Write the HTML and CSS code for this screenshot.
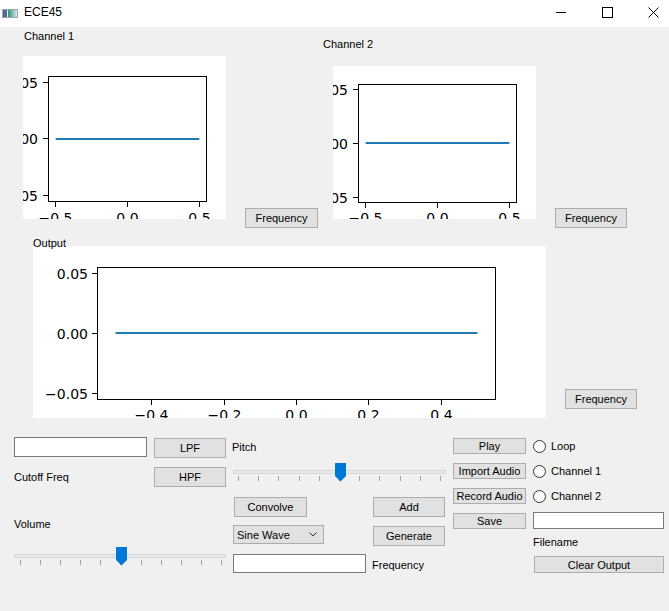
FILE: index.html
```html
<!DOCTYPE html>
<html>
<head>
<meta charset="utf-8">
<title>ECE45</title>
<link rel="stylesheet" href="styles.css">
</head>
<body>
<div class="titlebar">
  <svg class="app-icon" width="16" height="12" viewBox="0 0 16 12">
    <defs>
      <linearGradient id="ig" x1="0" x2="1" y1="0" y2="0">
        <stop offset="0" stop-color="#2f8f6f"/>
        <stop offset="1" stop-color="#d8ecf2"/>
      </linearGradient>
    </defs>
    <rect x="0.5" y="3.5" width="15" height="8" fill="#e8eef2" stroke="#9aa6b0"/>
    <rect x="1" y="4" width="4" height="7" fill="#4f6c8c"/>
    <rect x="6" y="4" width="9" height="7" fill="url(#ig)"/>
  </svg>
  <span class="title">ECE45</span>
  <div class="winctl">
    <div class="wbtn"><svg width="11" height="11" viewBox="0 0 11 11"><path d="M0 5.5H10" stroke="#000" stroke-width="1"/></svg></div>
    <div class="wbtn"><svg width="11" height="11" viewBox="0 0 11 11"><rect x="0.5" y="0.5" width="10" height="10" fill="none" stroke="#000"/></svg></div>
    <div class="wbtn close"><svg width="11" height="11" viewBox="0 0 11 11"><path d="M0.5 0.5L10.5 10.5M10.5 0.5L0.5 10.5" stroke="#000" stroke-width="1"/></svg></div>
  </div>
</div>

<div class="top-row">
  <div class="ch ch1">
    <div class="lbl">Channel 1</div>
    <div class="canvas c1">
      <svg width="203" height="163" viewBox="0 0 203 163" class="plot">
        <g stroke="#000" stroke-width="1" fill="none">
          <rect x="25.5" y="20.5" width="158" height="125"/>
          <path d="M20 26.5H25M20 82.5H25M20 139.5H25M32.5 146V151M104.5 146V151M176.5 146V151"/>
        </g>
        <path d="M32.7 83H176.3" stroke="#1f77b4" stroke-width="2"/>
        <g class="tl" text-anchor="end">
          <text x="15" y="31.5">0.05</text>
          <text x="15" y="87.5">0.00</text>
          <text x="15" y="144.5">−0.05</text>
        </g>
        <g class="tl" text-anchor="middle">
          <text x="32.5" y="167">−0.5</text>
          <text x="104.5" y="167">0.0</text>
          <text x="176.5" y="167">0.5</text>
        </g>
      </svg>
    </div>
  </div>
  <button class="btn freq f1">Frequency</button>
  <div class="ch ch2">
    <div class="lbl">Channel 2</div>
    <div class="canvas c2">
      <svg width="203" height="153" viewBox="0 0 203 153" class="plot">
        <g stroke="#000" stroke-width="1" fill="none">
          <rect x="25.5" y="18.5" width="158" height="118"/>
          <path d="M20 23.5H25M20 77.5H25M20 131.5H25M32.5 137V142M104.5 137V142M176.5 137V142"/>
        </g>
        <path d="M32.7 77H176.3" stroke="#1f77b4" stroke-width="2"/>
        <g class="tl" text-anchor="end">
          <text x="15" y="28.5">0.05</text>
          <text x="15" y="82.5">0.00</text>
          <text x="15" y="136.5">−0.05</text>
        </g>
        <g class="tl" text-anchor="middle">
          <text x="32.5" y="157">−0.5</text>
          <text x="104.5" y="157">0.0</text>
          <text x="176.5" y="157">0.5</text>
        </g>
      </svg>
    </div>
  </div>
  <button class="btn freq f2">Frequency</button>
</div>

<div class="out-row">
  <div class="out">
    <div class="lbl out-lbl">Output</div>
    <div class="canvas c3">
      <svg width="513" height="172" viewBox="0 0 513 172" class="plot">
        <g stroke="#000" stroke-width="1" fill="none">
          <rect x="64.5" y="21.5" width="398" height="132"/>
          <path d="M59 27.5H64M59 87.5H64M59 147.5H64M118.5 154V159M191.5 154V159M263.5 154V159M335.5 154V159M408.5 154V159"/>
        </g>
        <path d="M82.6 87H444.4" stroke="#1f77b4" stroke-width="2"/>
        <g class="tl" text-anchor="end">
          <text x="55" y="32.5">0.05</text>
          <text x="55" y="92.5">0.00</text>
          <text x="55" y="152.5">−0.05</text>
        </g>
        <g class="tl" text-anchor="middle">
          <text x="118.5" y="174">−0.4</text>
          <text x="191.5" y="174">−0.2</text>
          <text x="263.5" y="174">0.0</text>
          <text x="335.5" y="174">0.2</text>
          <text x="408.5" y="174">0.4</text>
        </g>
      </svg>
    </div>
  </div>
  <button class="btn freq f3">Frequency</button>
</div>

<div class="controls">
  <div class="col col-a">
    <div class="row r-lpf">
      <input class="field cutoff" type="text">
      <button class="btn filt lpf">LPF</button>
    </div>
    <div class="row r-hpf">
      <span class="grow">Cutoff Freq</span>
      <button class="btn filt">HPF</button>
    </div>
    <div class="lbl vol-lbl">Volume</div>
    <div class="slider vol">
      <div class="groove"></div>
      <svg class="handle" width="11" height="19" viewBox="0 0 11 19"><path d="M0 0H11V13L5.5 18.5L0 13Z" fill="#0078d7"/></svg>
      <div class="ticks"><i></i><i></i><i></i><i></i><i></i><i></i><i></i><i></i><i></i><i></i><i></i></div>
    </div>
  </div>

  <div class="col col-b">
    <div class="lbl pitch-lbl">Pitch</div>
    <div class="slider pitch">
      <div class="groove"></div>
      <svg class="handle" width="11" height="19" viewBox="0 0 11 19"><path d="M0 0H11V13L5.5 18.5L0 13Z" fill="#0078d7"/></svg>
      <div class="ticks"><i></i><i></i><i></i><i></i><i></i><i></i><i></i><i></i><i></i><i></i><i></i></div>
    </div>
    <div class="row r-conv">
      <button class="btn mid conv">Convolve</button>
      <button class="btn mid">Add</button>
    </div>
    <div class="row r-gen">
      <div class="combo"><span>Sine Wave</span><svg width="8" height="5" viewBox="0 0 8 5"><path d="M0.5 0.5L4 4L7.5 0.5" fill="none" stroke="#333" stroke-width="1"/></svg></div>
      <button class="btn mid gen">Generate</button>
    </div>
    <div class="row r-freq">
      <input class="field freqin" type="text">
      <span class="freq-lbl">Frequency</span>
    </div>
  </div>

  <div class="col col-c">
    <div class="row r-c first">
      <button class="btn small">Play</button>
      <span class="radio"></span><span class="rlbl">Loop</span>
    </div>
    <div class="row r-c">
      <button class="btn small">Import Audio</button>
      <span class="radio"></span><span class="rlbl">Channel 1</span>
    </div>
    <div class="row r-c">
      <button class="btn small">Record Audio</button>
      <span class="radio"></span><span class="rlbl">Channel 2</span>
    </div>
    <div class="row r-c">
      <button class="btn small">Save</button>
      <input class="field fname" type="text">
    </div>
    <div class="lbl fname-lbl">Filename</div>
    <button class="btn clear">Clear Output</button>
  </div>
</div>
</body>
</html>
```

FILE: styles.css
```css
html, body {
  margin: 0;
  padding: 0;
  overflow: hidden;
}
body {
  width: 669px;
  height: 611px;
  background: #f0f0f0;
  font-family: "Liberation Sans", Arial, sans-serif;
  font-size: 11px;
  color: #000;
}

/* title bar */
.titlebar {
  box-sizing: border-box;
  height: 27px;
  padding-bottom: 3px;
  background: #fff;
  display: flex;
  align-items: center;
}
.app-icon {
  margin-left: 2px;
  display: block;
}
.title {
  margin-left: 6px;
  font-size: 12px;
}
.winctl {
  margin-left: auto;
  display: flex;
  height: 24px;
}
.wbtn {
  width: 46px;
  height: 24px;
  display: flex;
  align-items: center;
  justify-content: center;
}
.wbtn svg { display: block; }
.wbtn.close {
  box-sizing: border-box;
  width: 39px;
  justify-content: flex-start;
  padding-left: 18px;
}

/* generic */
.lbl {
  line-height: 13px;
  height: 13px;
  white-space: nowrap;
}
.btn {
  box-sizing: border-box;
  margin: 0;
  padding: 0;
  background: #e1e1e1;
  border: 1px solid #adadad;
  border-radius: 0;
  font-family: inherit;
  font-size: 11px;
  color: #000;
  display: flex;
  align-items: center;
  justify-content: center;
  white-space: nowrap;
}
.field {
  box-sizing: border-box;
  margin: 0;
  padding: 0;
  background: #fff;
  border: 1px solid #7a7a7a;
  border-radius: 0;
  outline: none;
}
.canvas {
  background: #fff;
  overflow: hidden;
}
.plot {
  display: block;
}
.tl text {
  font-family: "DejaVu Sans", sans-serif;
  font-size: 14px;
  fill: #000;
}
.row {
  display: flex;
  align-items: flex-start;
}

/* top row */
.top-row {
  display: flex;
  align-items: flex-start;
}
.ch1 {
  margin-left: 23px;
  margin-top: 3px;
}
.ch1 .lbl { padding-left: 1px; }
.c1 {
  margin-top: 13px;
  width: 203px;
  height: 163px;
}
.freq {
  width: 73px;
  height: 20px;
}
.f1 {
  margin-left: 19px;
  margin-top: 181px;
}
.ch2 {
  margin-left: 5px;
  margin-top: 11px;
}
.c2 {
  margin-top: 15px;
  margin-left: 10px;
  width: 203px;
  height: 153px;
}
.f2 {
  margin-left: 19px;
  margin-top: 181px;
  width: 72px;
}

/* output row */
.out-row {
  display: flex;
  align-items: flex-start;
  margin-top: 9px;
}
.out {
  margin-left: 33px;
}
.out-lbl {
  position: relative;
  z-index: 1;
  margin-bottom: -4px;
}
.c3 {
  width: 513px;
  height: 172px;
}
.f3 {
  margin-left: 19px;
  margin-top: 152px;
  width: 72px;
}

/* controls */
.controls {
  display: flex;
  align-items: flex-start;
  margin-top: 19px;
}
.col-a {
  margin-left: 14px;
  width: 212px;
}
.cutoff {
  width: 133px;
  height: 20px;
}
.filt {
  width: 72px;
  height: 20px;
}
.lpf {
  margin-left: 7px;
  margin-top: 1px;
}
.r-hpf {
  margin-top: 9px;
  align-items: center;
}
.grow { flex: 1; }
.vol-lbl { margin-top: 31px; }

.slider {
  position: relative;
  height: 26px;
}
.groove {
  box-sizing: border-box;
  position: relative;
  top: 7px;
  height: 4px;
  background: #e7eaea;
  border: 1px solid #d6d6d6;
}
.handle {
  position: absolute;
  top: 0;
  left: 102px;
  display: block;
}
.ticks {
  box-sizing: border-box;
  display: flex;
  justify-content: space-between;
  margin-top: 9px;
  height: 5px;
}
.ticks i {
  display: block;
  width: 1px;
  height: 5px;
  background: #a0a0a0;
}
.vol {
  margin-top: 16px;
  width: 212px;
}
.vol .ticks {
  padding: 0 4px 0 6px;
}

.col-b {
  margin-left: 6px;
  width: 214px;
}
.pitch-lbl { margin-top: 4px; }
.pitch {
  margin-top: 9px;
  margin-left: 1px;
  width: 213px;
}
.pitch .ticks {
  padding: 0 5px;
}
.mid {
  width: 72px;
  height: 20px;
}
.r-conv {
  margin-top: 8px;
  justify-content: space-between;
  padding: 0 1px 0 2px;
}
.conv { width: 73px; }
.r-gen {
  margin-top: 8px;
  justify-content: space-between;
  padding: 0 1px 0 1px;
}
.combo {
  box-sizing: border-box;
  width: 91px;
  height: 19px;
  background: #e1e1e1;
  border: 1px solid #adadad;
  display: flex;
  align-items: center;
  justify-content: space-between;
  padding: 0 6px 0 3px;
}
.combo svg { display: block; }
.gen { margin-top: 1px; }
.r-freq {
  margin-top: 8px;
  padding-left: 1px;
  align-items: center;
}
.freqin {
  width: 133px;
  height: 19px;
}
.freq-lbl {
  margin-left: 6px;
  margin-top: 2px;
}

.col-c {
  margin-left: 7px;
  width: 211px;
}
.r-c {
  margin-top: 9px;
  align-items: center;
}
.r-c.first { margin-top: 1px; }
.small {
  width: 73px;
  height: 16px;
}
.radio {
  box-sizing: border-box;
  width: 13px;
  height: 13px;
  margin-left: 7px;
  border: 1px solid #333;
  border-radius: 50%;
  background: #fff;
}
.rlbl { margin-left: 5px; }
.fname {
  margin-left: 7px;
  width: 131px;
  height: 17px;
  margin-top: -1px;
}
.fname-lbl {
  margin-left: 80px;
  margin-top: 7px;
}
.clear {
  margin-left: 81px;
  margin-top: 7px;
  width: 130px;
  height: 17px;
}
```
